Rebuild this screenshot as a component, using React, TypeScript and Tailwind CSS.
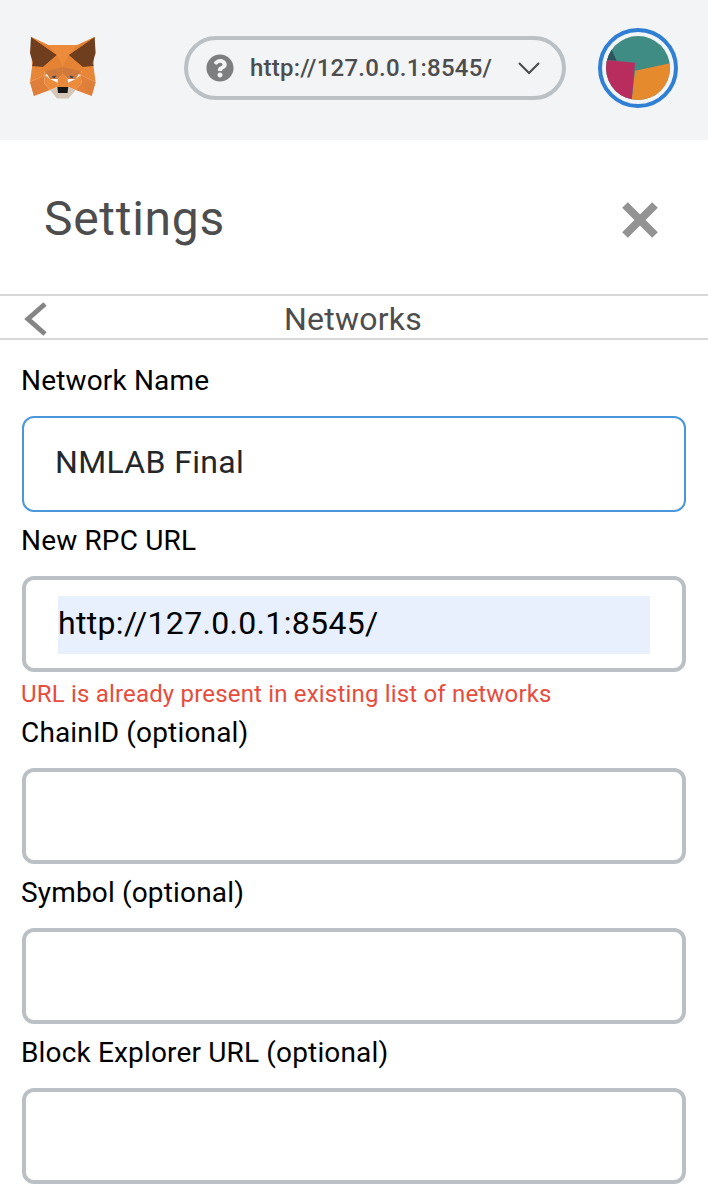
import { FaQuestionCircle } from "react-icons/fa";

const font = { fontFamily: "Roboto, sans-serif" };

function FoxHalf() {
  return (
    <>
      <polygon points="1,0 18,8 33,8 33,40 22,36 2,30" fill="#E9883A" />
      <polygon points="1,0 27,18 13,30 2,29 3,26 0,16" fill="#6F3E1E" />
      <polygon points="1,0 18,8 27,18" fill="#E58133" />
      <polygon points="18,8 33,8 33,30 27,18" fill="#EC8B3C" />
      <polygon points="2,30 13,30 15,38 0,45" fill="#E88638" />
      <polygon points="13,30 27,18 33,30 33,36 24,34 15,38" fill="#E58334" />
      <polygon points="15,34 33,30 33,36 28,42 20,42" fill="#CF7A3C" />
      <polygon points="15,38 20,42 28,46 27,50 20,53 14,46" fill="#EC8B3C" />
      <polygon points="28,42 33,36 33,50 27,50" fill="#E9883A" />
      <polygon points="0,45 15,38 14,46 20,53 4,59" fill="#E27F38" />
      <polygon points="0,45 14,46 4,59" fill="#DE7E3B" />
      <polygon points="20,53 27,50 28,56 33,56 33,61.5 27,61.5" fill="#D5C6B8" />
      <polygon points="27.3,50 33,50 33,56 28,56" fill="#161616" />
      <polygon points="22,39.5 26,38.5 25,41 23,41" fill="#33465C" />
    </>
  );
}

function Fox() {
  return (
    <svg viewBox="0 0 66 62" className="w-[66px] h-[62px] shrink-0">
      <FoxHalf />
      <g transform="translate(65.6 0) scale(-1 1)">
        <FoxHalf />
      </g>
    </svg>
  );
}

function Avatar() {
  return (
    <div className="w-20 h-20 rounded-full border-4 border-[#2f7fd5] flex items-center justify-center shrink-0">
      <svg viewBox="0 0 64 64" className="w-16 h-16 rounded-full bg-[#3f8c85]">
        <polygon points="29,34.7 64,27.3 64,64 25.7,64" fill="#e68a2e" />
        <polygon points="5.7,14 10.7,24.7 0,24 0,10" fill="#2a5560" />
        <polygon points="0,24 29,26.7 25.7,64 0,64" fill="#b82d5e" />
      </svg>
    </div>
  );
}

function Label({ children }: { children: string }) {
  return (
    <div className="h-16 pb-[6px] flex items-center text-[28px] tracking-[0.16px] text-black -ml-px">
      {children}
    </div>
  );
}

function Field({ value, focused }: { value?: string; focused?: boolean }) {
  return (
    <input
      readOnly
      defaultValue={value}
      className={`block w-full h-24 rounded-xl bg-white pl-[31px] pr-8 pb-1 text-[32px] tracking-[0.35px] outline-none ${
        focused
          ? "border-2 border-[#4a97dc] text-[#24272a]"
          : "border-4 border-[#bbc0c5] text-black"
      }`}
      style={font}
    />
  );
}

export default function App() {
  return (
    <div className="w-[708px] h-[1192px] bg-white overflow-hidden" style={font}>
      <header className="h-[140px] bg-[#f2f4f6] flex items-center pl-[30px] pr-[30px] pb-1">
        <Fox />
        <div className="ml-[88px] w-[382px] h-16 rounded-full border-4 border-[#bbc0c5] flex items-center pl-[18px] shrink-0">
          <FaQuestionCircle className="w-[28px] h-[28px] text-[#7c7e80] shrink-0" />
          <span className="ml-4 text-[24px] font-medium tracking-[0.22px] text-[#4d4d4d] whitespace-nowrap">
            http://127.0.0.1:8545/
          </span>
          <svg viewBox="0 0 24 14" className="ml-[25px] w-6 h-[14px] shrink-0">
            <polyline
              points="2,2 12,12 22,2"
              fill="none"
              stroke="#4d4d4d"
              strokeWidth="2.2"
            />
          </svg>
        </div>
        <div className="ml-auto">
          <Avatar />
        </div>
      </header>

      <div className="h-[154px] flex items-center justify-between pl-[44px] pr-[48px] pt-1">
        <h1 className="text-[48px] tracking-[0.7px] text-[#4d4d4d] leading-none">Settings</h1>
        <svg viewBox="0 0 40 40" className="w-10 h-10 mt-[2px]">
          <path
            d="M5 5 L35 35 M35 5 L5 35"
            stroke="#939393"
            strokeWidth="8"
            fill="none"
          />
        </svg>
      </div>

      <div className="relative h-[46px] border-y-2 border-[#d8d8d8] flex items-center justify-center pt-1">
        <svg
          viewBox="0 0 24 36"
          className="absolute left-[24px] top-[5px] w-6 h-9"
        >
          <polyline
            points="21,3 4,18 21,33"
            fill="none"
            stroke="#858585"
            strokeWidth="5"
          />
        </svg>
        <span className="text-[32px] tracking-[0.25px] text-[#4d4d4d] leading-none -ml-0.5">Networks</span>
      </div>

      <form className="px-[22px] pt-3">
        <Label>Network Name</Label>
        <Field value="NMLAB Final" focused />
        <Label>New RPC URL</Label>
        <div className="h-24 rounded-xl border-4 border-[#bbc0c5] px-8 py-4">
          <input
            readOnly
            defaultValue="http://127.0.0.1:8545/"
            className="block w-full h-[58px] bg-[#e8f0fe] pb-[5px] text-[32px] tracking-[0.33px] text-black outline-none"
            style={font}
          />
        </div>
        <div className="h-8 pt-2 -ml-px text-[24px] leading-7 tracking-[0.18px] text-[#e74c3c] whitespace-nowrap">
          URL is already present in existing list of networks
        </div>
        <Label>ChainID (optional)</Label>
        <Field />
        <Label>Symbol (optional)</Label>
        <Field />
        <Label>Block Explorer URL (optional)</Label>
        <Field />
      </form>
    </div>
  );
}
